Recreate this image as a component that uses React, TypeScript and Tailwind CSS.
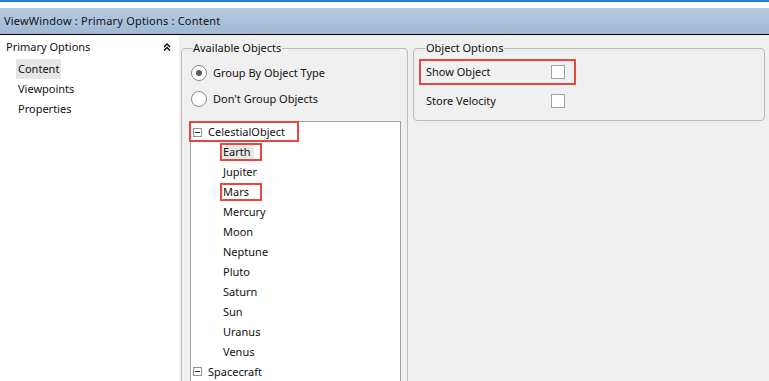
import React from 'react'

const planets = ['Earth', 'Jupiter', 'Mars', 'Mercury', 'Moon', 'Neptune', 'Pluto', 'Saturn', 'Sun', 'Uranus', 'Venus']

function Radio({ checked, label }: { checked?: boolean; label: string }) {
  return (
    <div className="flex items-center h-[26px] pl-[9px]">
      <span className="w-[16px] h-[16px] rounded-full border border-[#8c8c8c] bg-white flex items-center justify-center">
        {checked && <span className="w-[6px] h-[6px] rounded-full bg-[#5a5a5a]" />}
      </span>
      <span className="ml-[6px]">{label}</span>
    </div>
  )
}

function Expander() {
  return (
    <span className="w-[9px] h-[9px] border border-[#919191] bg-white flex items-center justify-center ml-[2px]">
      <span className="w-[5px] h-px bg-[#333]" />
    </span>
  )
}

function OptionRow({ label, marked }: { label: string; marked?: boolean }) {
  return (
    <div className={`ml-[5px] w-[157px] h-[26px] flex items-center border-2 ${marked ? 'border-[#e8463f]' : 'border-transparent'}`}>
      <span className="pl-[5px] w-[130px]">{label}</span>
      <span className="w-[14px] h-[14px] border border-[#a3a3a3] bg-white" />
    </div>
  )
}

export default function App() {
  return (
    <div className="w-[769px] h-[381px] overflow-hidden bg-[#f0f0f0] text-[11px] leading-[16px] text-[#111] flex flex-col" style={{ fontFamily: '"Noto Sans", sans-serif' }}>
      <div className="h-[2px] bg-[#1b7fd6]" />
      <div className="h-[6px] bg-white" />
      <div className="h-[27px] border-b border-black bg-gradient-to-b from-[#b8cce1] to-[#9eb8d4] flex items-center px-[4px] tracking-[0.2px]">
        ViewWindow : Primary Options : Content
      </div>

      <div className="flex flex-1 min-h-0">
        {/* left nav */}
        <div className="w-[179px] bg-white pt-[4px]">
          <div className="flex items-center justify-between pl-[6px] pr-[8px] h-[16px]">
            <span>Primary Options</span>
            <svg width="8" height="8" viewBox="0 0 8 8" fill="none" stroke="#000" strokeWidth="1.4">
              <path d="M1 4 L4 1 L7 4" />
              <path d="M1 7.5 L4 4.5 L7 7.5" />
            </svg>
          </div>
          <div className="mt-[4px] pl-[16px]">
            <div className="h-[20px] flex items-center"><span className="bg-[#e6e6e6] px-[2px] h-[20px] flex items-center">Content</span></div>
            <div className="h-[20px] flex items-center pl-[2px]">Viewpoints</div>
            <div className="h-[20px] flex items-center pl-[2px]">Properties</div>
          </div>
        </div>

        {/* right content */}
        <div className="flex-1 flex items-start gap-[5px] pl-[2px] pt-[5px]">
          <fieldset className="w-[227px] h-[400px] shrink-0 border border-[#bcbcbc] rounded-[4px]">
            <legend className="ml-[10px] px-[1px] leading-[16px]">Available Objects</legend>
            <div className="pt-[4px]">
              <Radio checked label="Group By Object Type" />
              <Radio label="Don't Group Objects" />
            </div>
            <div className="mt-[9px] ml-[8px] w-[211px] h-[300px] border border-[#a0a0a0] bg-white">
              <div className="relative h-[20px] flex items-center">
                <Expander />
                <span className="ml-[6px]">CelestialObject</span>
                <span className="absolute left-[-2px] top-[-1px] w-[110px] h-[21px] border-2 border-[#e8463f]" />
              </div>
              {planets.map(p => (
                <div key={p} className="relative h-[20px] flex items-center pl-[32px] pb-[1px]">
                  <span className={p === 'Earth' ? 'bg-[#e8e8e8] pr-[3px]' : ''}>{p}</span>
                  {(p === 'Earth' || p === 'Mars') && (
                    <span className="absolute left-[29px] top-[1px] w-[42px] h-[18px] border-2 border-[#e8463f]" />
                  )}
                </div>
              ))}
              <div className="h-[20px] flex items-center pb-[1px]">
                <Expander />
                <span className="ml-[6px]">Spacecraft</span>
              </div>
            </div>
          </fieldset>

          <fieldset className="w-[352px] h-[81px] shrink-0 border border-[#bcbcbc] rounded-[4px]">
            <legend className="ml-[11px] px-[1px] leading-[16px]">Object Options</legend>
            <div className="pt-[3px] flex flex-col gap-[3px]">
              <OptionRow label="Show Object" marked />
              <OptionRow label="Store Velocity" />
            </div>
          </fieldset>
        </div>
      </div>
    </div>
  )
}
